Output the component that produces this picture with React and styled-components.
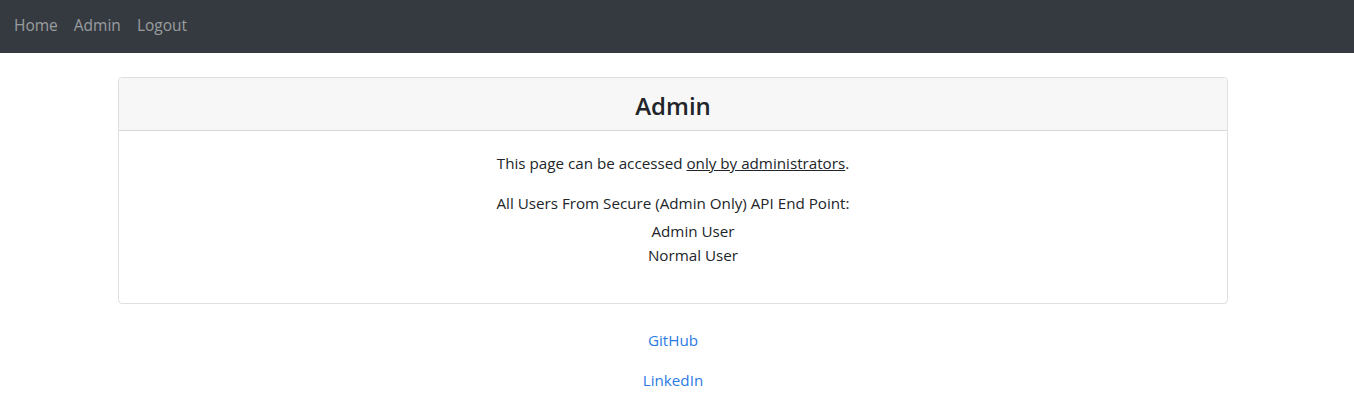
import React from "react";
import styled, { createGlobalStyle } from "styled-components";

const GlobalStyle = createGlobalStyle`
  body {
    margin: 0;
    font-family: "Open Sans", "Noto Sans", sans-serif;
    font-size: 15.2px;
    line-height: 24px;
    color: #212529;
    background: #fff;
  }
  * {
    box-sizing: border-box;
  }
`;

const users = ["Admin User", "Normal User"];

const App = () => {
  return (
    <>
      <GlobalStyle />
      <Navbar>
        <NavLink href="#">Home</NavLink>
        <NavLink href="#">Admin</NavLink>
        <NavLink href="#">Logout</NavLink>
      </Navbar>
      <Main>
        <Container>
          <Card>
            <CardHeader>
              <Title>Admin</Title>
            </CardHeader>
            <CardBody>
              <Text>
                This page can be accessed <u>only by administrators</u>.
              </Text>
              <Text small>All Users From Secure (Admin Only) API End Point:</Text>
              <UserList>
                {users.map((u) => (
                  <li key={u}>{u}</li>
                ))}
              </UserList>
            </CardBody>
          </Card>
          <Footer>
            <FooterLink href="#">GitHub</FooterLink>
            <FooterLink href="#">LinkedIn</FooterLink>
          </Footer>
        </Container>
      </Main>
    </>
  );
};

const Navbar = styled.nav`
  height: 53px;
  background-color: #343a40;
  display: flex;
  align-items: flex-start;
  padding: 5px 6px 0;
`;

const NavLink = styled.a`
  color: rgba(255, 255, 255, 0.5);
  text-decoration: none;
  padding: 8px;
  font-size: 15.5px;
`;

const Main = styled.main`
  padding-right: 8px;
`;

const Container = styled.div`
  width: 1110px;
  margin: 24px auto 0;
`;

const Card = styled.div`
  border: 1px solid rgba(0, 0, 0, 0.125);
  border-radius: 4px;
  overflow: hidden;
`;

const CardHeader = styled.div`
  background-color: #f7f7f7;
  border-bottom: 1px solid rgba(0, 0, 0, 0.125);
  padding: 14px 20px 10px;
  text-align: center;
`;

const Title = styled.h4`
  margin: 0;
  font-size: 24px;
  font-weight: 600;
  line-height: 28px;
`;

const CardBody = styled.div`
  padding: 20px;
  text-align: center;
`;

const Text = styled.p`
  margin: 0 0 ${(p) => (p.small ? "4px" : "16px")};
`;

const UserList = styled.ul`
  list-style: none;
  margin: 0 0 16px;
  padding-left: 40px;
`;

const Footer = styled.div`
  margin-top: 24px;
  display: flex;
  flex-direction: column;
  align-items: center;
  gap: 16px;
`;

const FooterLink = styled.a`
  color: #2c7be5;
  text-decoration: none;
`;

export default App;
